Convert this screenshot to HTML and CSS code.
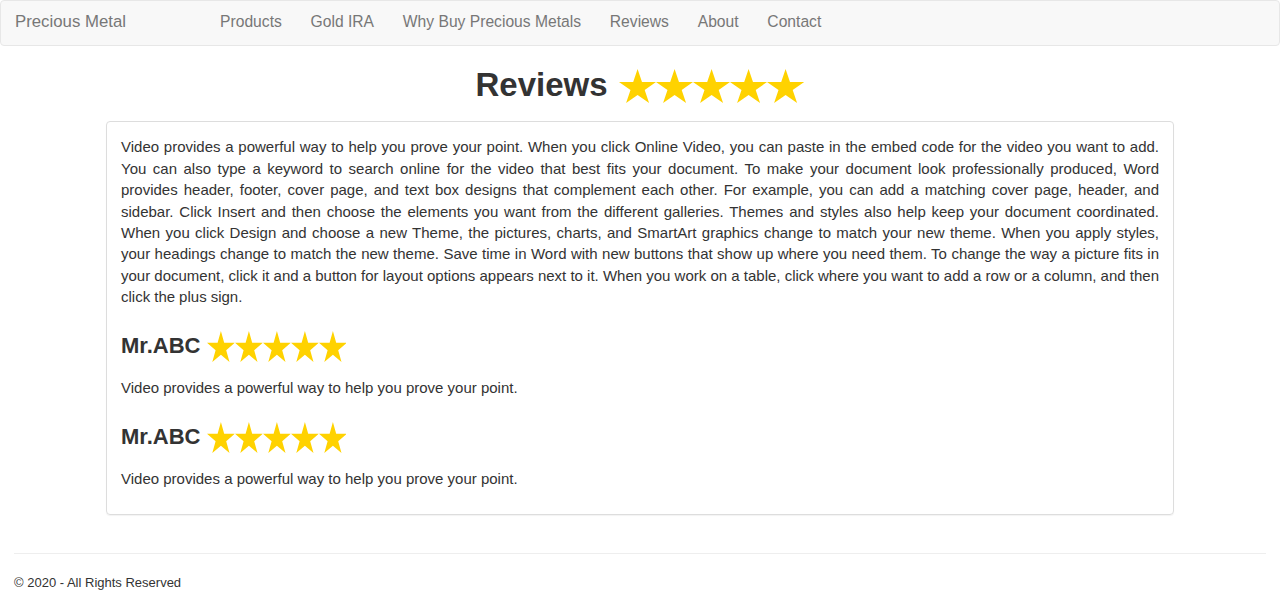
FILE: index.html
```html
<!DOCTYPE html>
<html lang="en">
<head>
<meta charset="utf-8">
<title>Reviews - Precious Metal</title>
<link rel="stylesheet" href="styles.css">
</head>
<body>
<svg class="defs" width="0" height="0" aria-hidden="true">
  <symbol id="star" viewBox="2.45 0 95.1 90.45" preserveAspectRatio="none">
    <polygon points="50,0 61.23,34.55 97.55,34.55 68.16,55.9 79.39,90.45 50,69.1 20.61,90.45 31.84,55.9 2.45,34.55 38.77,34.55"/>
  </symbol>
</svg>

<nav class="navbar">
  <a class="brand" href="#">Precious Metal</a>
  <ul class="nav">
    <li><a href="#">Products</a></li>
    <li><a href="#">Gold IRA</a></li>
    <li><a href="#">Why Buy Precious Metals</a></li>
    <li><a href="#">Reviews</a></li>
    <li><a href="#">About</a></li>
    <li><a href="#">Contact</a></li>
  </ul>
</nav>

<main class="main">
  <h1 class="page-title">
    <span>Reviews</span>
    <span class="stars stars-lg">
      <svg class="star"><use href="#star"/></svg><svg class="star"><use href="#star"/></svg><svg class="star"><use href="#star"/></svg><svg class="star"><use href="#star"/></svg><svg class="star"><use href="#star"/></svg>
    </span>
  </h1>

  <section class="panel">
    <p class="lead-text">Video provides a powerful way to help you prove your point. When you click Online Video, you can paste in the embed code for the video you want to add. You can also type a keyword to search online for the video that best fits your document. To make your document look professionally produced, Word provides header, footer, cover page, and text box designs that complement each other. For example, you can add a matching cover page, header, and sidebar. Click Insert and then choose the elements you want from the different galleries. Themes and styles also help keep your document coordinated. When you click Design and choose a new Theme, the pictures, charts, and SmartArt graphics change to match your new theme. When you apply styles, your headings change to match the new theme. Save time in Word with new buttons that show up where you need them. To change the way a picture fits in your document, click it and a button for layout options appears next to it. When you work on a table, click where you want to add a row or a column, and then click the plus sign.</p>

    <h3 class="review-title">
      <span class="reviewer">Mr.ABC</span>
      <span class="stars stars-sm">
        <svg class="star"><use href="#star"/></svg><svg class="star"><use href="#star"/></svg><svg class="star"><use href="#star"/></svg><svg class="star"><use href="#star"/></svg><svg class="star"><use href="#star"/></svg>
      </span>
    </h3>
    <p class="review-text">Video provides a powerful way to help you prove your point.</p>

    <h3 class="review-title">
      <span class="reviewer">Mr.ABC</span>
      <span class="stars stars-sm">
        <svg class="star"><use href="#star"/></svg><svg class="star"><use href="#star"/></svg><svg class="star"><use href="#star"/></svg><svg class="star"><use href="#star"/></svg><svg class="star"><use href="#star"/></svg>
      </span>
    </h3>
    <p class="review-text">Video provides a powerful way to help you prove your point.</p>
  </section>
</main>

<footer class="footer">
  <hr class="rule">
  <p class="copy">&copy; 2020 - All Rights Reserved</p>
</footer>
</body>
</html>
```

FILE: styles.css
```css
* { box-sizing: border-box; }

html, body {
  margin: 0;
  padding: 0;
  background: #fff;
}

body {
  font-family: "Liberation Sans", Arial, sans-serif;
  font-size: 15px;
  line-height: 1.428571;
  color: #333;
}

.defs {
  position: absolute;
  width: 0;
  height: 0;
  overflow: hidden;
}

/* Navbar */
.navbar {
  display: flex;
  align-items: center;
  height: 46px;
  padding: 0 0 2px 14px;
  background: #f8f8f8;
  border: 1px solid #e7e7e7;
  border-radius: 4px;
}

.brand {
  font-size: 16.8px;
  color: #777;
  text-decoration: none;
  line-height: 20px;
}

.nav {
  display: flex;
  list-style: none;
  margin: 0 0 0 79.7px;
  padding: 0;
}

.nav li a {
  display: block;
  padding: 0 14.4px;
  font-size: 15.65px;
  line-height: 20px;
  color: #777;
  text-decoration: none;
}

/* Title */
.main {
  display: flex;
  flex-direction: column;
  align-items: center;
}

.page-title {
  display: flex;
  align-items: center;
  justify-content: center;
  gap: 11px;
  margin: 22px 0 17px;
  font-size: 33px;
  font-weight: bold;
  line-height: 1.1;
  color: #333;
}

.page-title span:first-child {
  position: relative;
  top: -1px;
}

.stars {
  display: flex;
  fill: #ffd200;
}

.stars-lg .star {
  width: 37.2px;
  height: 34px;
}

.stars-sm .star {
  width: 27.8px;
  height: 31px;
}

/* Panel */
.panel {
  display: flex;
  flex-direction: column;
  width: 1068px;
  padding: 14px;
  border: 1px solid #ddd;
  border-radius: 4px;
  box-shadow: 0 1px 1px rgba(0, 0, 0, 0.05);
}

.panel p {
  margin: 0 0 10px;
}

.lead-text {
  text-align: justify;
  word-spacing: -0.12px;
}

.review-title {
  display: flex;
  align-items: center;
  gap: 7px;
  height: 32px;
  margin: 13px 0 14.5px;
  font-size: 22px;
  font-weight: bold;
  line-height: 1.1;
  color: #333;
}

.reviewer {
  position: relative;
  top: -1px;
}

/* Footer */
.footer {
  padding: 0 14px;
  margin-top: 38px;
}

.rule {
  margin: 0;
  border: 0;
  border-top: 1px solid #eee;
}

.copy {
  margin: 20px 0 0;
  font-size: 13px;
  line-height: 18.57px;
  color: #333;
}
```
